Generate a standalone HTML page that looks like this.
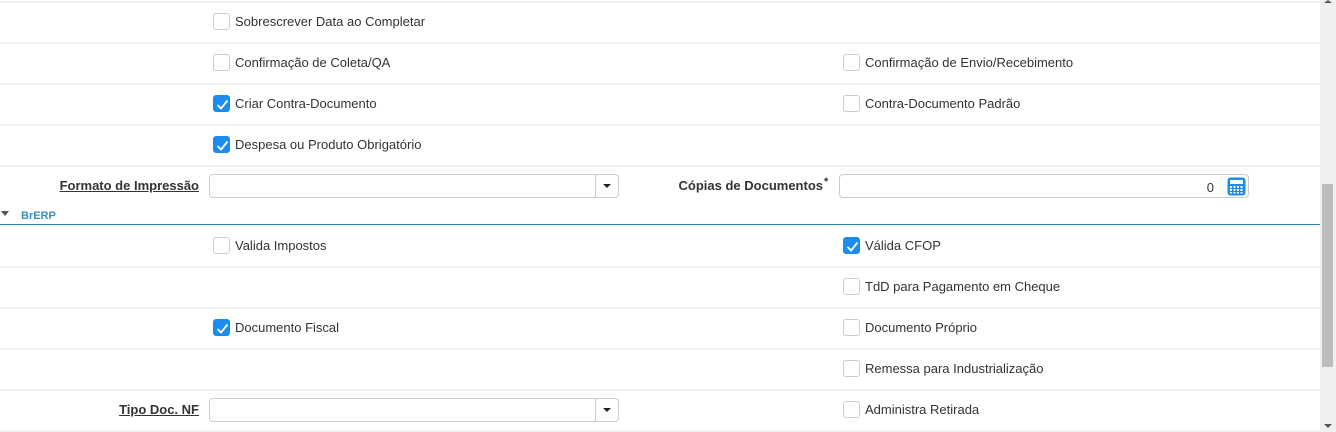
<!DOCTYPE html>
<html><head><meta charset="utf-8"><style>
*{margin:0;padding:0;box-sizing:border-box}
body{width:1336px;height:432px;overflow:hidden;background:#fff;font-family:"Liberation Sans",sans-serif;font-size:13px;color:#333;position:relative}
.ln{position:absolute;left:0;width:1320px;height:2px;background:#f0f0f0}
.cb{position:absolute;width:17px;height:17px;border:1px solid #ccc;border-radius:3px;background:#fff}
.cb.on{background:#1a8ef0;border-color:#1a8ef0}
.cb.on svg{position:absolute;left:2px;top:2px}
.t{position:absolute;font-size:13px;color:#333;line-height:16px;margin-top:1px}
.lb{position:absolute;font-weight:bold;font-size:13px;color:#333;line-height:16px;text-align:right}
.u{text-decoration:underline}
.inp{position:absolute;height:24px;border:1px solid #ccc;border-radius:4px;background:#fff}
.dd{position:absolute;right:0;top:0;width:23px;height:22px;border-left:1px solid #ccc}
.dd:after{content:"";position:absolute;left:7px;top:9px;border-left:4px solid transparent;border-right:4px solid transparent;border-top:4px solid #222}
</style></head><body>
<div class="ln" style="top:1px"></div>
<div class="ln" style="top:42px"></div>
<div class="ln" style="top:83px"></div>
<div class="ln" style="top:124px"></div>
<div class="ln" style="top:165px"></div>
<div class="ln" style="top:266px"></div>
<div class="ln" style="top:307px"></div>
<div class="ln" style="top:348px"></div>
<div class="ln" style="top:389px"></div>
<div class="ln" style="top:430px"></div>

<div class="cb" style="left:213px;top:13px"></div><div class="t" style="left:235px;top:13px">Sobrescrever Data ao Completar</div>
<div class="cb" style="left:213px;top:54px"></div><div class="t" style="left:235px;top:54px">Confirmação de Coleta/QA</div>
<div class="cb" style="left:843px;top:54px"></div><div class="t" style="left:865px;top:54px">Confirmação de Envio/Recebimento</div>
<div class="cb on" style="left:213px;top:95px"><svg width="13" height="13" viewBox="0 0 13 13"><path d="M1.5 7 L5 10.5 L11.5 2.5" fill="none" stroke="#fff" stroke-width="1.8"/></svg></div><div class="t" style="left:235px;top:95px">Criar Contra-Documento</div>
<div class="cb" style="left:843px;top:95px"></div><div class="t" style="left:865px;top:95px">Contra-Documento Padrão</div>
<div class="cb on" style="left:213px;top:136px"><svg width="13" height="13" viewBox="0 0 13 13"><path d="M1.5 7 L5 10.5 L11.5 2.5" fill="none" stroke="#fff" stroke-width="1.8"/></svg></div><div class="t" style="left:235px;top:136px">Despesa ou Produto Obrigatório</div>

<div class="lb u" style="left:0;width:199px;top:178px">Formato de Impressão</div>
<div class="inp" style="left:209px;top:174px;width:410px"><div class="dd"></div></div>
<div class="lb" style="left:600px;width:223px;top:178px">Cópias de Documentos</div>
<div class="t" style="left:824px;top:173px;font-size:11px;font-weight:bold">*</div>
<div class="inp" style="left:839px;top:174px;width:410px"><div class="t" style="right:34px;top:4px">0</div>
<svg style="position:absolute;left:387px;top:2px" width="19" height="19" viewBox="0 0 19 19"><rect x="0.5" y="0.5" width="18" height="18" rx="3" fill="#1a8ef0"/><rect x="3" y="3" width="13" height="4" fill="#fff"/><g fill="#fff"><rect x="3" y="9" width="2" height="2"/><rect x="6.5" y="9" width="2" height="2"/><rect x="10" y="9" width="2" height="2"/><rect x="13.5" y="9" width="2" height="2"/><rect x="3" y="12" width="2" height="2"/><rect x="6.5" y="12" width="2" height="2"/><rect x="10" y="12" width="2" height="2"/><rect x="13.5" y="12" width="2" height="2"/><rect x="3" y="15" width="2" height="1.5"/><rect x="6.5" y="15" width="2" height="1.5"/><rect x="10" y="15" width="2" height="1.5"/><rect x="13.5" y="15" width="2" height="1.5"/></g></svg></div>

<div style="position:absolute;left:1px;top:211px;border-left:4px solid transparent;border-right:4px solid transparent;border-top:5px solid #555"></div>
<div style="position:absolute;left:21px;top:210px;font-size:11px;font-weight:bold;color:#3a8fc0">BrERP</div>
<div style="position:absolute;left:0;top:224px;width:1320px;height:1px;background:#2f87a8"></div>

<div class="cb" style="left:213px;top:237px"></div><div class="t" style="left:235px;top:237px">Valida Impostos</div>
<div class="cb on" style="left:843px;top:237px"><svg width="13" height="13" viewBox="0 0 13 13"><path d="M1.5 7 L5 10.5 L11.5 2.5" fill="none" stroke="#fff" stroke-width="1.8"/></svg></div><div class="t" style="left:865px;top:237px">Válida CFOP</div>
<div class="cb" style="left:843px;top:278px"></div><div class="t" style="left:865px;top:278px">TdD para Pagamento em Cheque</div>
<div class="cb on" style="left:213px;top:319px"><svg width="13" height="13" viewBox="0 0 13 13"><path d="M1.5 7 L5 10.5 L11.5 2.5" fill="none" stroke="#fff" stroke-width="1.8"/></svg></div><div class="t" style="left:235px;top:319px">Documento Fiscal</div>
<div class="cb" style="left:843px;top:319px"></div><div class="t" style="left:865px;top:319px">Documento Próprio</div>
<div class="cb" style="left:843px;top:360px"></div><div class="t" style="left:865px;top:360px">Remessa para Industrialização</div>
<div class="lb u" style="left:0;width:199px;top:402px">Tipo Doc. NF</div>
<div class="inp" style="left:209px;top:398px;width:410px"><div class="dd"></div></div>
<div class="cb" style="left:843px;top:401px"></div><div class="t" style="left:865px;top:401px">Administra Retirada</div>

<div style="position:absolute;left:1320px;top:0;width:16px;height:432px;background:#f0f0f0"></div>
<div style="position:absolute;left:1322px;top:184px;width:11px;height:183px;background:#bdbdbd"></div>
<div style="position:absolute;left:1324px;top:0;border-left:4px solid transparent;border-right:4px solid transparent;border-bottom:3px solid #555"></div>
<div style="position:absolute;left:1324px;top:424px;border-left:4px solid transparent;border-right:4px solid transparent;border-top:4px solid #555"></div>
</body></html>
